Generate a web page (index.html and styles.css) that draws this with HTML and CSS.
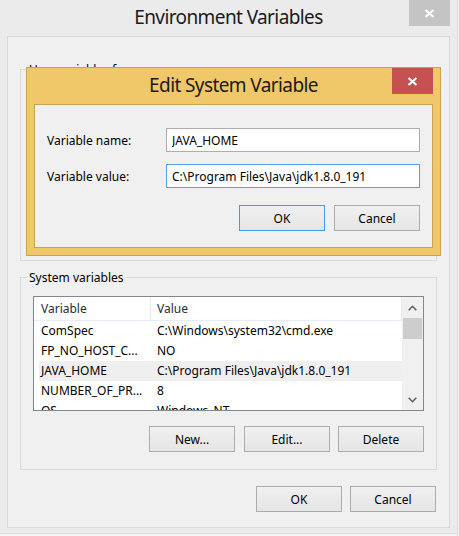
FILE: index.html
```html
<!DOCTYPE html>
<html>
<head>
<meta charset="utf-8">
<link rel="stylesheet" href="styles.css">
</head>
<body>
<div class="screen">
  <div class="window">
    <div class="titlebar">
      <span class="title">Environment Variables</span>
      <div class="close close-gray">
        <svg width="11" height="9" viewBox="0 0 11 9"><path d="M1.5 1 L9.5 8 M9.5 1 L1.5 8" stroke="#fff" stroke-width="2.2" fill="none"/></svg>
      </div>
    </div>
    <div class="client">
      <fieldset class="group user-group">
        <legend>User variables for user</legend>
        <div class="user-body"></div>
      </fieldset>
      <fieldset class="group sys-group">
        <legend>System variables</legend>
        <div class="sys-body">
          <div class="listview">
            <div class="list-main">
              <div class="list-header">
                <div class="hcell hcell1">Variable</div>
                <div class="hcell hcell2">Value</div>
              </div>
              <div class="row"><div class="cell1">ComSpec</div><div class="cell2">C:\Windows\system32\cmd.exe</div></div>
              <div class="row"><div class="cell1">FP_NO_HOST_C...</div><div class="cell2">NO</div></div>
              <div class="row selected"><div class="cell1">JAVA_HOME</div><div class="cell2">C:\Program Files\Java\jdk1.8.0_191</div></div>
              <div class="row"><div class="cell1">NUMBER_OF_PR...</div><div class="cell2">8</div></div>
              <div class="row"><div class="cell1">OS</div><div class="cell2">Windows_NT</div></div>
            </div>
            <div class="vscroll">
              <div class="sb-btn"><svg width="9" height="6" viewBox="0 0 9 6"><path d="M0.7 5.3 L4.5 1.3 L8.3 5.3" stroke="#606060" stroke-width="1.6" fill="none"/></svg></div>
              <div class="sb-thumb"></div>
              <div class="sb-track"></div>
              <div class="sb-btn"><svg width="9" height="6" viewBox="0 0 9 6"><path d="M0.7 0.7 L4.5 4.7 L8.3 0.7" stroke="#606060" stroke-width="1.6" fill="none"/></svg></div>
            </div>
          </div>
          <div class="btn-row sys-buttons">
            <button class="btn new-btn">New...</button>
            <button class="btn">Edit...</button>
            <button class="btn">Delete</button>
          </div>
        </div>
      </fieldset>
      <div class="btn-row main-buttons">
        <button class="btn">OK</button>
        <button class="btn">Cancel</button>
      </div>
    </div>
  </div>
  <div class="edge"></div>

  <div class="edit-dialog">
    <div class="edit-titlebar">
      <span class="title">Edit System Variable</span>
      <div class="close close-red">
        <svg width="11" height="9" viewBox="0 0 11 9"><path d="M1.5 1 L9.5 8 M9.5 1 L1.5 8" stroke="#fff" stroke-width="2.2" fill="none"/></svg>
      </div>
    </div>
    <div class="edit-client">
      <div class="form">
        <label class="form-label">Variable name:</label>
        <input class="input" type="text" value="JAVA_HOME">
        <label class="form-label">Variable value:</label>
        <input class="input input-focus" type="text" value="C:\Program Files\Java\jdk1.8.0_191">
      </div>
      <div class="btn-row edit-buttons">
        <button class="btn btn-default">OK</button>
        <button class="btn">Cancel</button>
      </div>
    </div>
  </div>
</div>
</body>
</html>
```

FILE: styles.css
```css
* { box-sizing: border-box; }

body {
  margin: 0;
  width: 459px;
  height: 536px;
  overflow: hidden;
  background: #f4f4f4;
  font-family: "Noto Sans", sans-serif;
  font-size: 12px;
  color: #000;
}

.screen {
  position: relative;
  display: flex;
  height: 536px;
}

.window {
  width: 457px;
  height: 534px;
  flex: none;
  background: #ebebeb;
  display: flex;
  flex-direction: column;
  border-bottom: 1px solid #dcdcdc;
}

.edge {
  flex: 1;
  background: #f4f4f4;
  border-left: 1px solid #dedede;
}

.titlebar {
  position: relative;
  height: 36px;
  flex: none;
  display: flex;
  justify-content: center;
}

.title {
  font-size: 19px;
  letter-spacing: -0.6px;
  line-height: 27px;
  margin-top: 4px;
  color: #1a1a1a;
  white-space: nowrap;
}

.close {
  position: absolute;
  top: 0;
  right: 7px;
  width: 41px;
  height: 26px;
  display: flex;
  align-items: center;
  justify-content: center;
}
.close svg { display: block; }
.close-gray { background: #c4c4c4; }
.close-red { background: #c75050; }

.client {
  margin: 0 7px;
  height: 492px;
  flex: none;
  border: 1px solid #d9d9d9;
  background: #f0f0f0;
  display: flex;
  flex-direction: column;
  padding: 24px 12px 0;
}

.group {
  margin: 0;
  padding: 0;
  border: 1px solid #d9d9d9;
  min-width: 0;
}

.group legend {
  margin-left: 6px;
  padding: 0 2px;
  line-height: 17px;
  font-size: 12px;
  white-space: nowrap;
}

.user-body { height: 182px; }

.sys-group { margin-top: 8px; }

.sys-body { padding: 10px 12px 17px; }

.listview {
  height: 115px;
  border: 1px solid #828790;
  background: #fff;
  display: flex;
}

.list-main {
  flex: 1;
  overflow: hidden;
  min-width: 0;
}

.list-header {
  display: flex;
  height: 24px;
  border-bottom: 1px solid #e3ecf8;
  border-right: 1px solid #e3ecf8;
  color: #1e2b3c;
  line-height: 23px;
}

.hcell { white-space: nowrap; }
.hcell1 {
  width: 117px;
  padding-left: 7px;
  border-right: 1px solid #e3ecf8;
}
.hcell2 { padding-left: 6px; }

.row {
  display: flex;
  height: 20px;
  line-height: 20px;
  margin-left: 5px;
  white-space: nowrap;
}
.row.selected { background: #efefef; }
.cell1 { width: 118px; padding-left: 2px; flex: none; }

.vscroll {
  width: 21px;
  flex: none;
  background: #f0f0f0;
  display: flex;
  flex-direction: column;
}
.sb-btn {
  height: 21px;
  flex: none;
  display: flex;
  align-items: center;
  justify-content: center;
}
.sb-btn svg { display: block; }
.sb-thumb {
  height: 21px;
  flex: none;
  margin: 0 1px;
  background: #cdcdcd;
}
.sb-track { flex: 1; }

.btn-row {
  display: flex;
  justify-content: flex-end;
  gap: 8px;
}
.sys-buttons { margin-top: 15px; }
.new-btn { margin-right: 1px; }
.main-buttons { margin-top: 16px; margin-right: 1px; }

.btn {
  width: 86px;
  height: 26px;
  border: 1px solid #acacac;
  background: linear-gradient(#f0f0f0, #e5e5e5);
  font-family: "Noto Sans", sans-serif;
  font-size: 12px;
  color: #000;
  padding: 0;
  display: flex;
  align-items: center;
  justify-content: center;
}
.btn-default { border-color: #3c9cf0; }

.edit-dialog {
  position: absolute;
  left: 26px;
  top: 67px;
  width: 415px;
  height: 189px;
  border: 1px solid #c9a352;
  background: #f0c86a;
  padding: 0 7px 7px;
  display: flex;
  flex-direction: column;
}

.edit-titlebar {
  height: 36px;
  flex: none;
  display: flex;
  justify-content: center;
}

.edit-client {
  flex: 1;
  border: 1px solid #c9a352;
  background: #f0f0f0;
  padding: 23px 12px 0;
}

.form {
  display: grid;
  grid-template-columns: 119px 254px;
  row-gap: 12px;
  align-items: center;
}

.form-label { white-space: nowrap; }

.input {
  height: 24px;
  width: 254px;
  margin: 0;
  border: 1px solid #abadb3;
  background: #fff;
  padding: 0 5px;
  font-family: "Noto Sans", sans-serif;
  font-size: 12px;
  color: #000;
  outline: none;
}
.input-focus { border-color: #5a9fe3; }

.edit-buttons { margin-top: 17px; gap: 9px; }
```
